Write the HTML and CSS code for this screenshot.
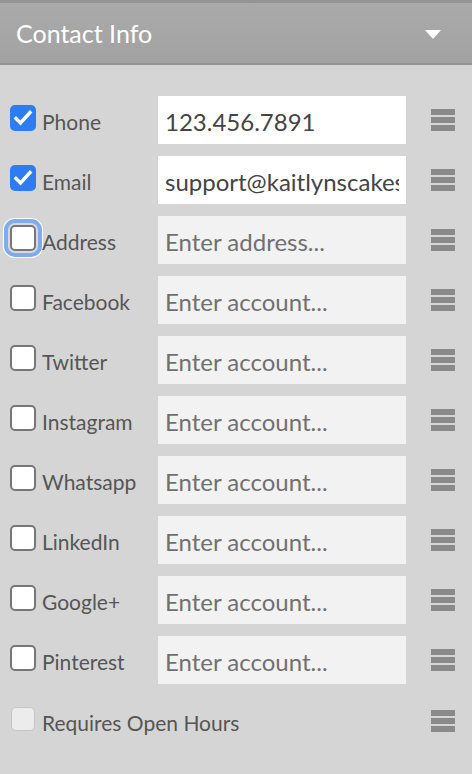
FILE: index.html
```html
<!DOCTYPE html>
<html lang="en">
<head>
  <meta charset="UTF-8">
  <meta name="viewport" content="width=device-width, initial-scale=1">
  <title>Contact Info</title>
  <link rel="stylesheet" href="styles.css">
</head>
<body>

  <div class="panel">
    <div class="panel-head">
      <span class="panel-title">Contact Info</span>
      <span class="caret"></span>
    </div>

    <div class="fields">
      <div class="row">
        <label class="check">
          <span class="box checked">
            <svg viewBox="0 0 26 26" width="26" height="26"><path d="M6 13.5l4.5 4.5L20 7.5" fill="none" stroke="#fff" stroke-width="3.4" stroke-linecap="square"/></svg>
          </span>
          <span class="label">Phone</span>
        </label>
        <input class="field filled" type="text" value="123.456.7891">
        <span class="handle"><i></i><i></i><i></i></span>
      </div>

      <div class="row">
        <label class="check">
          <span class="box checked">
            <svg viewBox="0 0 26 26" width="26" height="26"><path d="M6 13.5l4.5 4.5L20 7.5" fill="none" stroke="#fff" stroke-width="3.4" stroke-linecap="square"/></svg>
          </span>
          <span class="label">Email</span>
        </label>
        <input class="field filled" type="text" value="support@kaitlynscakes.com">
        <span class="handle"><i></i><i></i><i></i></span>
      </div>

      <div class="row">
        <label class="check">
          <span class="box focused"></span>
          <span class="label">Address</span>
        </label>
        <input class="field" type="text" placeholder="Enter address...">
        <span class="handle"><i></i><i></i><i></i></span>
      </div>

      <div class="row">
        <label class="check"><span class="box"></span><span class="label">Facebook</span></label>
        <input class="field" type="text" placeholder="Enter account...">
        <span class="handle"><i></i><i></i><i></i></span>
      </div>

      <div class="row">
        <label class="check"><span class="box"></span><span class="label">Twitter</span></label>
        <input class="field" type="text" placeholder="Enter account...">
        <span class="handle"><i></i><i></i><i></i></span>
      </div>

      <div class="row">
        <label class="check"><span class="box"></span><span class="label">Instagram</span></label>
        <input class="field" type="text" placeholder="Enter account...">
        <span class="handle"><i></i><i></i><i></i></span>
      </div>

      <div class="row">
        <label class="check"><span class="box"></span><span class="label">Whatsapp</span></label>
        <input class="field" type="text" placeholder="Enter account...">
        <span class="handle"><i></i><i></i><i></i></span>
      </div>

      <div class="row">
        <label class="check"><span class="box"></span><span class="label">LinkedIn</span></label>
        <input class="field" type="text" placeholder="Enter account...">
        <span class="handle"><i></i><i></i><i></i></span>
      </div>

      <div class="row">
        <label class="check"><span class="box"></span><span class="label">Google+</span></label>
        <input class="field" type="text" placeholder="Enter account...">
        <span class="handle"><i></i><i></i><i></i></span>
      </div>

      <div class="row">
        <label class="check"><span class="box"></span><span class="label">Pinterest</span></label>
        <input class="field" type="text" placeholder="Enter account...">
        <span class="handle"><i></i><i></i><i></i></span>
      </div>

      <div class="row">
        <label class="check wide"><span class="box disabled"></span><span class="label">Requires Open Hours</span></label>
        <span class="handle"><i></i><i></i><i></i></span>
      </div>
    </div>
  </div>

</body>
</html>
```

FILE: styles.css
```css
body {
  margin: 0;
  background: #d5d5d5;
  font-family: Lato, 'Open Sans', sans-serif;
  color: #555;
  min-height: 100vh;
}

.panel-head {
  display: flex;
  align-items: center;
  justify-content: space-between;
  height: 60px;
  padding: 0 31px 0 16px;
  border-top: 3px solid #959595;
  border-bottom: 2px solid #949494;
  background: linear-gradient(#aaaaaa, #a2a2a2);
}

.panel-title {
  color: #fff;
  font-size: 25px;
}

.caret {
  width: 0;
  height: 0;
  border-left: 8.5px solid transparent;
  border-right: 8.5px solid transparent;
  border-top: 9px solid #fff;
  margin-top: 2px;
}

.fields {
  display: flex;
  flex-direction: column;
  gap: 12px;
  padding: 31px 17px 20px 10px;
}

.row {
  display: grid;
  grid-template-columns: 148px 248px 1fr;
  align-items: center;
  height: 48px;
}

.row:last-child {
  margin-top: 1px;
}

.check {
  display: flex;
  align-items: center;
  gap: 6px;
}

.check.wide {
  grid-column: 1 / 3;
}

.box {
  display: block;
  box-sizing: border-box;
  width: 26px;
  height: 26px;
  border: 2px solid #777;
  border-radius: 5px;
  background: #fff;
  margin-top: -4px;
  flex-shrink: 0;
}

.box.checked {
  border: none;
  background: #2d7cf6;
}

.box svg {
  display: block;
}

.box.focused {
  box-shadow: 0 0 0 2px #d9d9d9, 0 0 0 6px #7eabf2, 0 0 0 7px #fff;
}

.box.disabled {
  width: 24px;
  height: 24px;
  margin-left: 1px;
  margin-right: 1px;
  border: 1px solid #c6c6c6;
  background: #ececec;
}

.label {
  font-size: 21px;
  line-height: 24px;
  margin-top: 4px;
}

.field {
  box-sizing: border-box;
  width: 248px;
  height: 48px;
  border: none;
  outline: none;
  padding: 2px 7px 0;
  background: #f2f2f2;
  font-family: Lato, 'Open Sans', sans-serif;
  font-size: 24px;
  color: #444;
}

.field.filled {
  background: #fff;
}

.field::placeholder {
  color: #707070;
}

.handle {
  justify-self: end;
  display: flex;
  flex-direction: column;
  gap: 2px;
}

.handle i {
  display: block;
  width: 24px;
  height: 6px;
  background: #8a8a8a;
}
```
